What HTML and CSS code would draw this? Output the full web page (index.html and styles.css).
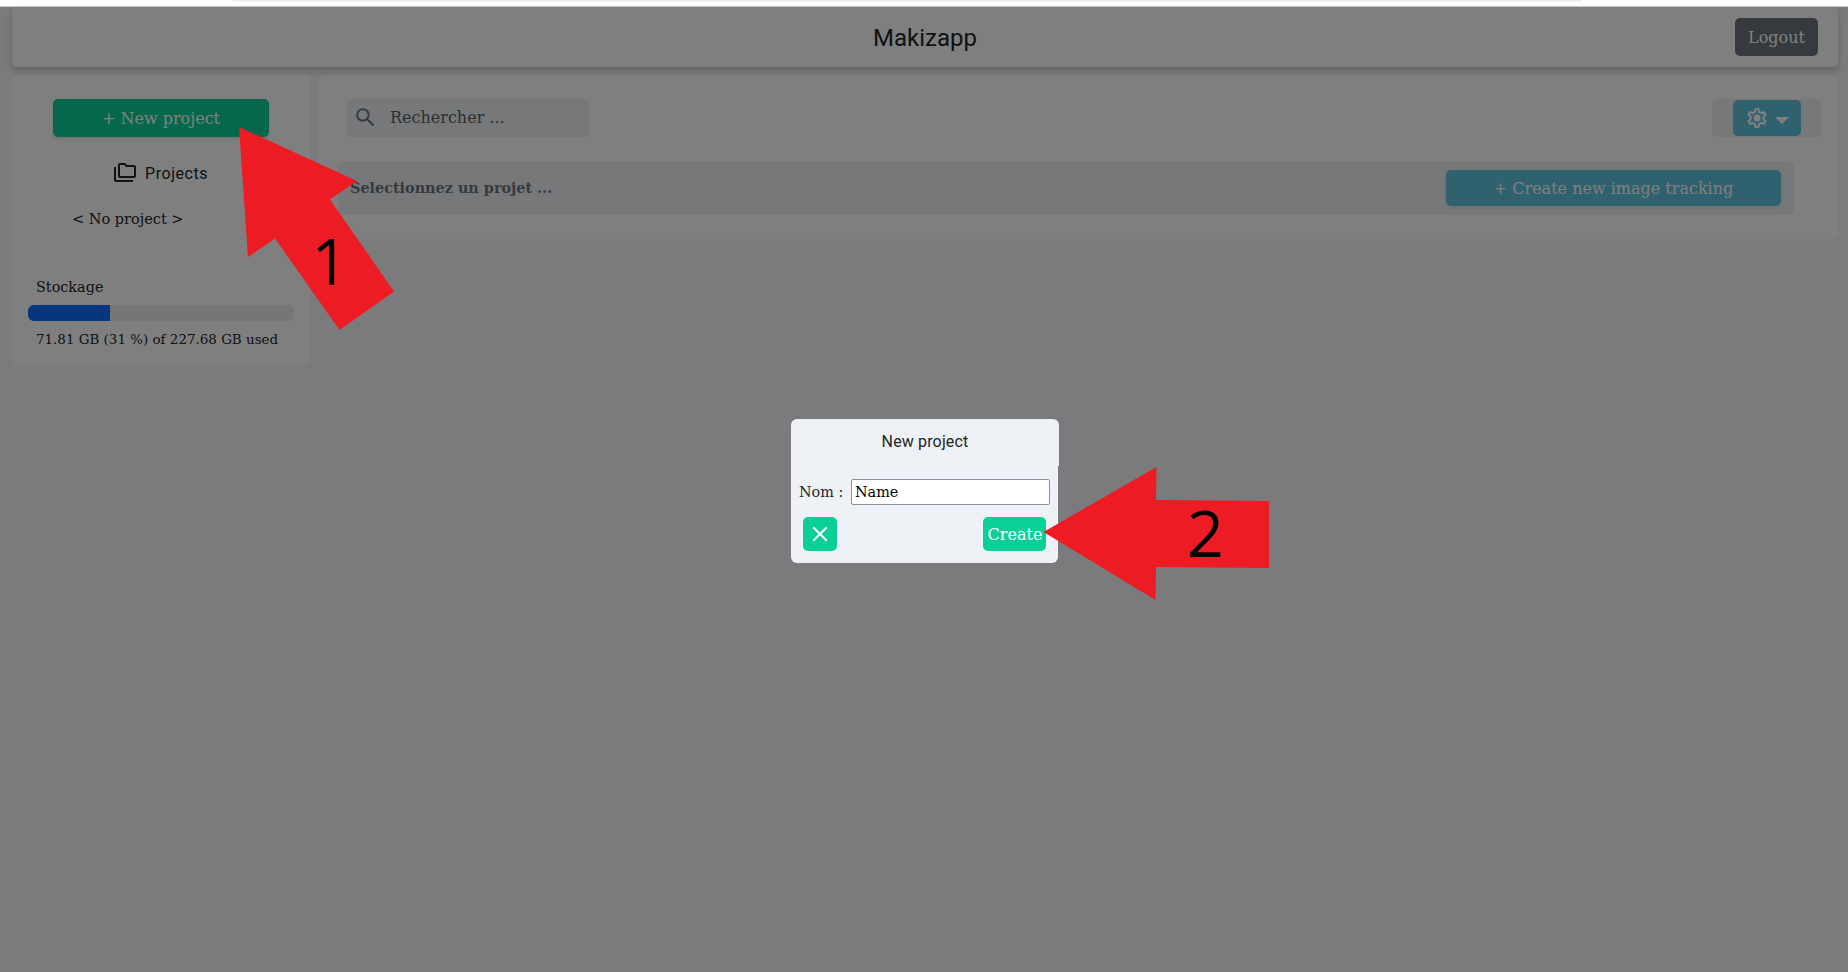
FILE: index.html
```html
<!DOCTYPE html>
<html lang="en">
<head>
<meta charset="utf-8">
<title>Makizapp</title>
<link rel="stylesheet" href="styles.css">
</head>
<body>
<div class="browser-edge"><div class="address"></div></div>
<div class="app">
  <header class="topbar">
    <h1 class="brand">Makizapp</h1>
    <button class="btn logout">Logout</button>
  </header>
  <div class="columns">
    <aside class="sidebar">
      <button class="btn new-project">+ New project</button>
      <div class="projects">
        <svg width="24" height="24" viewBox="0 0 24 24"><path fill="currentColor" d="M3 6H1v13c0 1.1.9 2 2 2h17v-2H3V6zM21 4h-7l-2-2H7c-1.100 0-1.990.9-1.990 2L5 15c0 1.100.9 2 2 2h14c1.100 0 2-.9 2-2V6c0-1.100-.9-2-2-2zm0 11H7V4h4.170l2 2H21v9z"/></svg>
        <span>Projects</span>
      </div>
      <div class="empty">&lt; No project &gt;</div>
      <div class="storage-title">Stockage</div>
      <div class="progress"><div class="progress-fill" style="width:31%"></div></div>
      <div class="storage-text">71.81 GB (31 %) of 227.68 GB used</div>
    </aside>
    <main class="content">
      <div class="tools">
        <div class="search">
          <svg width="25" height="25" viewBox="0 0 24 24"><path fill="currentColor" d="M15.500 14h-.79l-.28-.27A6.471 6.471 0 0 0 16 9.500 6.500 6.500 0 1 0 9.500 16c1.610 0 3.090-.59 4.230-1.570l.27.28v.79l5 4.990L20.490 19l-4.990-5zm-6 0C7.010 14 5 11.990 5 9.500S7.010 5 9.500 5 14 7.010 14 9.500 11.990 14 9.500 14z"/></svg>
          <span>Rechercher ...</span>
        </div>
        <div class="settings">
          <button class="btn gear">
            <svg width="24" height="24" viewBox="0 0 24 24"><path fill="currentColor" d="M19.430 12.980c.04-.32.07-.64.07-.98s-.03-.66-.07-.98l2.110-1.650c.19-.15.24-.42.12-.64l-2-3.460c-.12-.22-.39-.3-.61-.22l-2.490 1c-.52-.4-1.080-.73-1.690-.98l-.38-2.650A.49.49 0 0 0 14 2h-4c-.25 0-.46.180-.49.420l-.38 2.650c-.61.25-1.170.59-1.690.98l-2.490-1c-.23-.09-.49 0-.61.220l-2 3.460c-.13.220-.07.490.12.640l2.110 1.650c-.04.320-.07.650-.07.980s.03.660.07.980l-2.110 1.650c-.19.150-.24.420-.12.640l2 3.460c.12.220.39.300.61.220l2.490-1c.52.400 1.080.730 1.690.980l.38 2.650c.03.240.24.420.49.420h4c.25 0 .46-.18.49-.42l.38-2.650c.61-.25 1.170-.59 1.690-.98l2.490 1c.23.090.49 0 .61-.22l2-3.460c.12-.22.07-.49-.12-.64l-2.110-1.650zm-1.980-1.710c.04.310.05.520.05.730s-.02.430-.05.730l-.14 1.130.89.700 1.080.840-.7 1.210-1.270-.51-1.040-.42-.9.680c-.43.320-.84.560-1.250.730l-1.060.430-.16 1.130-.2 1.350h-1.400l-.19-1.350-.16-1.130-1.060-.43c-.43-.18-.83-.41-1.230-.71l-.91-.7-1.060.430-1.270.510-.7-1.210 1.080-.84.890-.7-.14-1.130c-.03-.31-.05-.54-.05-.74s.02-.43.05-.73l.14-1.130-.89-.7-1.080-.84.7-1.210 1.270.510 1.040.420.9-.68c.43-.32.84-.56 1.250-.73l1.060-.43.160-1.130.2-1.350h1.390l.19 1.350.16 1.130 1.060.430c.43.180.83.410 1.230.710l.91.700 1.060-.43 1.270-.51.700 1.210-1.070.850-.89.700.14 1.130z"/><circle cx="12" cy="12" r="3.500" fill="currentColor"/></svg>
            <svg class="caret" width="14" height="7" viewBox="0 0 14 7"><path fill="currentColor" d="M0 0h14L7 7z"/></svg>
          </button>
        </div>
      </div>
      <div class="selection">
        <b>Selectionnez un projet ...</b>
        <button class="btn tracking">+ Create new image tracking</button>
      </div>
    </main>
  </div>
</div>
<div class="backdrop">
  <div class="dialog">
    <div class="dialog-head">New project</div>
    <div class="dialog-body">
      <div class="field"><label for="name">Nom :</label><input id="name" value="Name"></div>
      <div class="actions">
        <button class="btn close" aria-label="Close"><svg width="16" height="16" viewBox="0 0 16 16"><path d="M1.200 1.200l13.600 13.600M14.800 1.200l-13.600 13.600" stroke="currentColor" stroke-width="2"/></svg></button>
        <button class="btn create">Create</button>
      </div>
    </div>
  </div>
</div>
<svg class="annotations" width="1848" height="972" viewBox="0 0 1848 972">
  <path class="arrow" d="M239 127L357 181L330 199.500L394 291.500L339.500 330L275 238.500L248 257Z"/>
  <path class="arrow" d="M1043.500 532L1156.500 467L1156 500L1269 501V568L1156 567L1155.500 600Z"/>
  <text class="step" x="311.500" y="285">1</text>
  <text class="step" x="1187" y="557">2</text>
</svg>
</body>
</html>
```
FILE: styles.css
```css
* { box-sizing: border-box; }
body {
  margin: 0;
  height: 972px;
  overflow: hidden;
  background: #f7f7fa;
  color: #212529;
  font: 16px/24px "DejaVu Serif", serif;
}
svg { display: block; flex: none; }
.browser-edge { height: 7px; padding: 0 266px 0 232px; background: #fff; border-bottom: 1px solid #c8cacc; }
.address { height: 2px; background: #f0f0f1; border-radius: 0 0 4px 4px; }
.app { padding: 0 10px 0 12px; }
.btn {
  border: 0;
  padding: 1px 0 0;
  border-radius: 5px;
  color: #fff;
  font: inherit;
  white-space: nowrap;
}
.topbar {
  display: grid;
  grid-template-columns: 1fr auto 1fr;
  align-items: center;
  height: 60px;
  padding: 0 20px;
  background: #fff;
  border-radius: 5px;
  box-shadow: 0 4px 8px rgba(0, 0, 0, .2);
}
.brand { grid-column: 2; margin: 0; padding-top: 2px; font: 24px/28px Roboto, sans-serif; }
.logout { justify-self: end; width: 83px; height: 38px; background: #6c757d; }
.columns { display: flex; align-items: flex-start; gap: 8px; margin-top: 8px; }
.sidebar {
  width: 298px;
  height: 290px;
  padding: 24px 16px 0;
  background: #fff;
  border-radius: 6px;
}
.new-project {
  display: block;
  width: 216px;
  height: 38px;
  margin-left: 25px;
  background: #0ad098;
  box-shadow: 0 2px 4px rgba(0, 0, 0, .1);
}
.projects { display: flex; align-items: center; gap: 8px; margin: 23px 0 0 85px; font: 16px/24px Roboto, sans-serif; letter-spacing: .55px; }
.projects span { padding-top: 2px; }
.empty { margin: 21px 0 0 44px; font-size: 14.500px; }
.storage-title { margin: 44px 0 0 8px; font-size: 14.400px; }
.progress { height: 16px; margin-top: 6px; overflow: hidden; border-radius: 6px; background: #e9ecef; }
.progress-fill { height: 100%; background: #0d6efd; }
.storage-text { margin: 7px 0 0 8px; font-size: 13.450px; white-space: nowrap; }
.content { flex: 1; height: 164px; padding: 24px 16px 0 20px; background: #fff; border-radius: 6px; }
.tools { display: flex; justify-content: space-between; padding-left: 8px; }
.search { display: flex; align-items: center; gap: 12px; width: 244px; height: 38px; padding: 0 0 2px 7px; border-radius: 6px; background: #eef1f5; color: #6c757d; }
.search span { padding-top: 2px; color: #5c5f62; }
.settings { display: flex; justify-content: center; align-items: center; width: 110px; height: 38px; border-radius: 6px; background: #eef1f5; }
.gear { display: flex; align-items: center; gap: 6px; width: 68px; height: 36px; padding: 0 0 0 12px; background: #5ec4dc; }
.caret { margin-top: 5px; }
.selection { display: flex; align-items: center; justify-content: space-between; width: 1456px; height: 54px; margin-top: 24px; padding: 0 13px 0 12px; border-radius: 6px; background: #eef1f5; font-size: 14.400px; color: #6c757d; }
.tracking { width: 335px; height: 36px; padding-top: 2px; font-size: 16px; background: #5ec4dc; box-shadow: 0 1px 4px rgba(0, 0, 0, .12); }
.backdrop { position: absolute; inset: 7px 0 0; padding: 412px 0 0 791px; background: rgba(0, 0, 0, .5); }
.dialog { width: 268px; }
.dialog-head { height: 47px; padding-top: 11px; border-radius: 6px 6px 0 0; background: #eef1f6; font: 16px/24px Roboto, sans-serif; text-align: center; letter-spacing: .15px; }
.dialog-body { width: 267px; height: 97px; padding: 13px 8px 0; border-radius: 0 0 6px 6px; background: #eef1f6; }
.field { display: flex; align-items: center; justify-content: space-between; font-size: 14.400px; }
.field input { width: 199px; height: 26px; padding: 0 3px; border: 1px solid #8f8f9d; border-radius: 2px; background: #fff; color: #000; font: inherit; }
.actions { display: flex; justify-content: space-between; padding: 12px 4px 0; }
.close { display: grid; place-items: center; width: 34px; height: 34px; padding: 0; background: #0ad098; }
.create { width: 63px; height: 34px; padding: 1px 0 0 1px; background: #0ad098; }
.annotations { position: absolute; left: 0; top: 0; }
.arrow { fill: #ed1c24; }
.step { font: 64.500px "Open Sans", sans-serif; fill: #000; }
```
